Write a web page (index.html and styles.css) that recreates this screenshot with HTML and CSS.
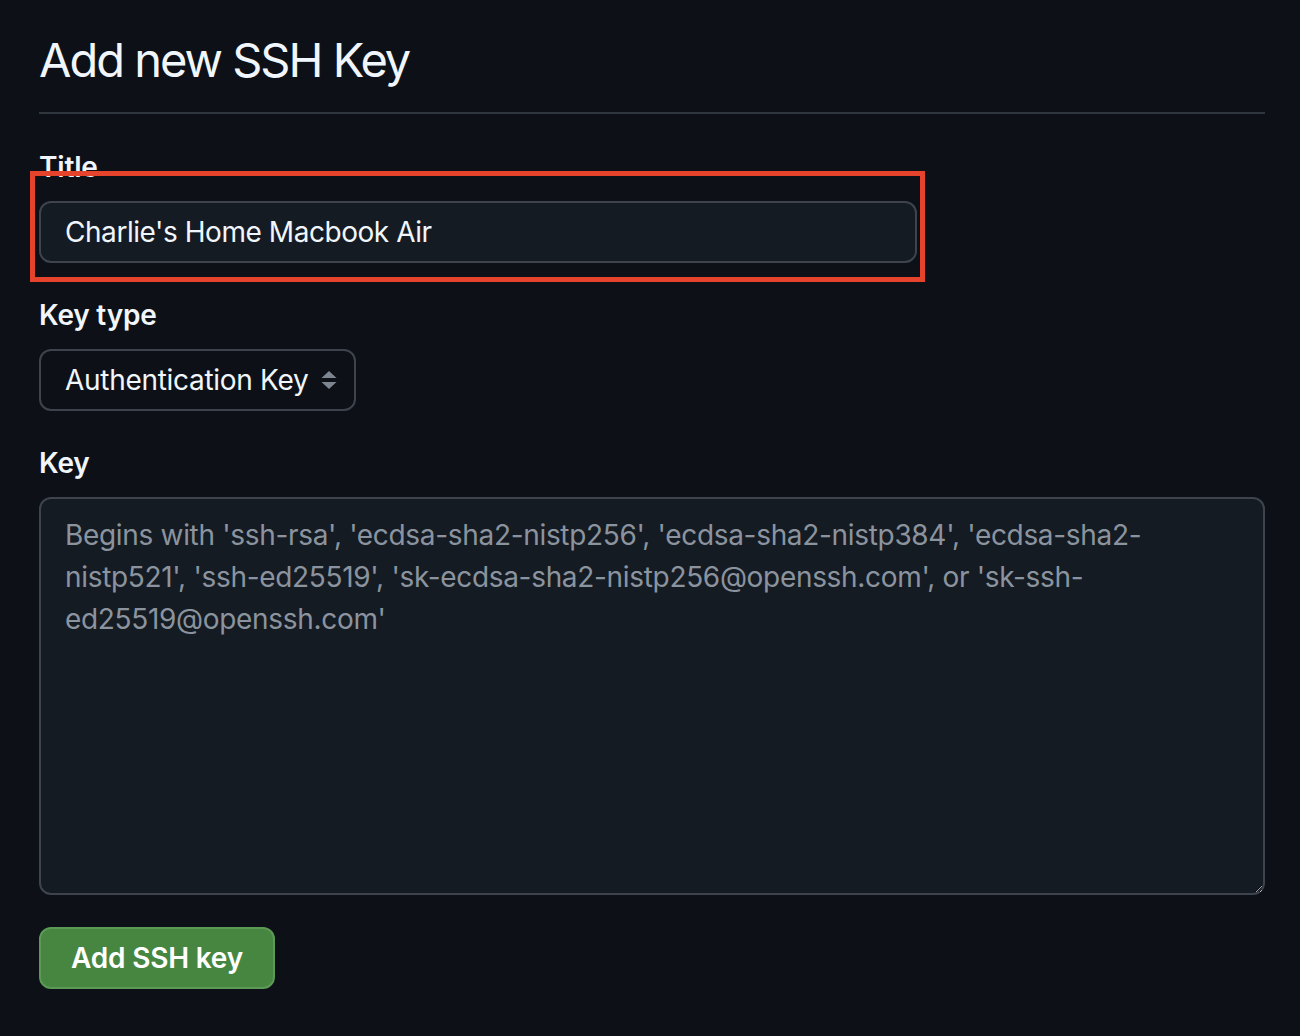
FILE: index.html
```html
<!DOCTYPE html>
<html lang="en">
<head>
<meta charset="utf-8">
<title>Add new SSH Key</title>
<link rel="stylesheet" href="styles.css">
</head>
<body>
<main class="page">
  <h1 class="page-title">Add new SSH Key</h1>
  <form class="ssh-form">
    <div class="field">
      <label class="field-label" for="title">Title</label>
      <div class="highlight-wrap">
        <input class="text-input" id="title" type="text" value="Charlie's Home Macbook Air">
        <span class="highlight-box"></span>
      </div>
    </div>
    <div class="field">
      <label class="field-label" for="keytype">Key type</label>
      <div class="select-box" id="keytype">
        <span class="select-value">Authentication Key</span>
        <svg class="select-arrows" width="16" height="18" viewBox="0 0 16 18" aria-hidden="true">
          <path d="M8 0 L15.5 7 L0.5 7 Z" fill="#7d8590"/>
          <path d="M0.5 11 L15.5 11 L8 18 Z" fill="#7d8590"/>
        </svg>
      </div>
    </div>
    <div class="field">
      <label class="field-label" for="key">Key</label>
      <textarea class="key-area" id="key" placeholder="Begins with 'ssh-rsa', 'ecdsa-sha2-nistp256', 'ecdsa-sha2-nistp384', 'ecdsa-sha2-nistp521', 'ssh-ed25519', 'sk-ecdsa-sha2-nistp256@openssh.com', or 'sk-ssh-ed25519@openssh.com'"></textarea>
    </div>
    <button class="btn-primary" type="button">Add SSH key</button>
  </form>
</main>
</body>
</html>
```
FILE: styles.css
```css
* { box-sizing: border-box; }
html, body { margin: 0; padding: 0; background: #0d1117; }
body {
  font-family: Inter, "Noto Sans", "Liberation Sans", sans-serif;
  color: #f0f6fc;
  color-scheme: dark;
}
.page {
  padding: 30px 35px 0 39px;
  width: 1300px;
  height: 1036px;
}
.page-title {
  margin: 0;
  font-size: 47px;
  font-weight: 400;
  line-height: 60px;
  padding-bottom: 22px;
  border-bottom: 2px solid #30363d;
  letter-spacing: -2px;
}
.ssh-form {
  display: flex;
  flex-direction: column;
  padding-top: 32px;
}
.field {
  display: flex;
  flex-direction: column;
  align-items: flex-start;
  margin-bottom: 31px;
}
.field-label {
  font-size: 28px;
  font-weight: 600;
  line-height: 42px;
  margin-bottom: 13px;
  letter-spacing: -0.2px;
}
.highlight-wrap {
  position: relative;
  width: 878px;
}
.text-input {
  display: block;
  width: 878px;
  height: 62px;
  border: 2px solid #3d444d;
  border-radius: 12px;
  background: #151b23;
  color: #f0f6fc;
  font-family: inherit;
  font-size: 28px;
  letter-spacing: -0.45px;
  padding: 0 24px;
  outline: none;
}
.highlight-box {
  position: absolute;
  left: -9px;
  top: -30px;
  width: 895px;
  height: 111px;
  border: 5px solid #e5432c;
  pointer-events: none;
}
.select-box {
  display: flex;
  align-items: center;
  justify-content: space-between;
  width: 317px;
  height: 62px;
  border: 2px solid #3d444d;
  border-radius: 12px;
  background: #0d1117;
  padding: 0 17px 0 24px;
  font-size: 28px;
  letter-spacing: -0.3px;
  white-space: nowrap;
}
.select-arrows { flex: none; }
.key-area {
  display: block;
  width: 1226px;
  height: 398px;
  border: 2px solid #3d444d;
  border-radius: 12px;
  background: #151b23;
  color: #f0f6fc;
  font-family: inherit;
  font-size: 28px;
  letter-spacing: -0.32px;
  line-height: 42px;
  padding: 15px 24px 14px;
  resize: vertical;
  outline: none;
}
.key-area::placeholder { color: #8b949e; }
.btn-primary {
  align-self: flex-start;
  width: 236px;
  height: 62px;
  margin-top: 1px;
  background: #468641;
  border: 2px solid #5b9a55;
  border-radius: 12px;
  color: #ffffff;
  font-family: inherit;
  font-size: 28px;
  font-weight: 600;
  letter-spacing: -0.2px;
  padding: 0;
}
```
